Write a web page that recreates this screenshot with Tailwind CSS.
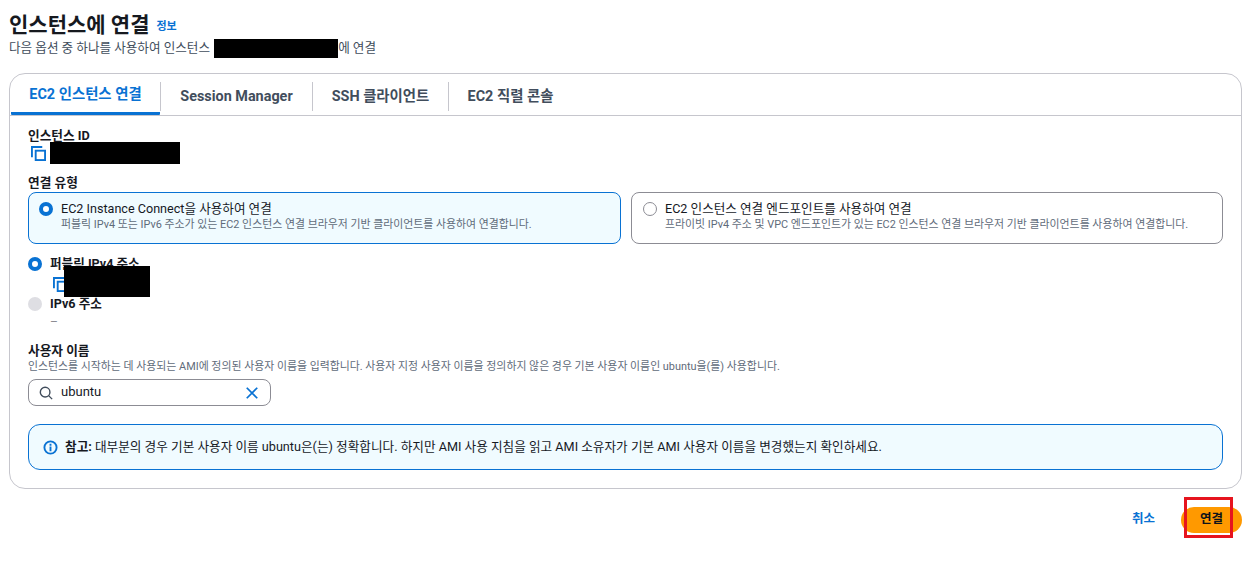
<!DOCTYPE html>
<html lang="ko">
<head>
  <meta charset="UTF-8">
  <title>인스턴스에 연결</title>
  <script src="https://cdn.jsdelivr.net/npm/@tailwindcss/browser@4"></script>
</head>
<body class="bg-white text-[#16191f] font-['Roboto','Noto_Sans_CJK_KR',sans-serif] overflow-hidden">
  <div class="relative w-[1251px] h-[564px] pl-[9px] pr-[9px] pt-[12px]">
    <!-- Header -->
    <div class="flex items-center gap-[7px] h-[26px]">
      <h1 class="text-[21px] leading-[26px] font-bold">인스턴스에 연결</h1>
      <a class="text-[11px] font-bold text-[#0972d3] mt-[5px]">정보</a>
    </div>
    <p class="relative text-[12.6px] leading-[20px] text-[#414d5c] h-[20px]">
      다음 옵션 중 하나를 사용하여 인스턴스 <span class="inline-block w-[124px] h-[19px] ml-[1px] bg-black align-middle"></span>에 연결
    </p>

    <!-- Card -->
    <div class="mt-[15px] h-[416px] border border-[#c6c6cd] rounded-[16px]">
      <!-- Tabs -->
      <div class="flex h-[42px] border-b border-[#c6c6cd] text-[14.4px] font-bold text-[#414d5c] pt-[4px]">
        <div class="w-[149px] h-[37px] flex items-center justify-center text-[#0972d3] border-b-[3px] border-[#0972d3] rounded-b-[1px] ml-[1px] -mb-px">EC2 인스턴스 연결</div>
        <div class="w-[152px] h-[29px] mt-[4px] flex items-center justify-center border-l border-[#c6c6cd]">Session Manager</div>
        <div class="w-[136px] h-[29px] mt-[4px] flex items-center justify-center border-l border-[#c6c6cd]">SSH 클라이언트</div>
        <div class="w-[124px] h-[29px] mt-[4px] flex items-center justify-center border-l border-[#c6c6cd]">EC2 직렬 콘솔</div>
      </div>

      <div class="pl-[18px] pr-[18px] pt-[12px]">
        <!-- Instance ID -->
        <div class="text-[12.7px] leading-[16px] font-bold">인스턴스 ID</div>
        <div class="flex items-center h-[22px] -mt-[2px]">
          <svg class="ml-[3px] mt-[1px]" width="15" height="15" viewBox="0 0 16 16" fill="none" stroke="#0972d3" stroke-width="2"><path d="M1 12V1h11"/><rect x="5" y="5" width="10" height="10"/></svg>
          <span class="inline-block w-[130px] h-[22px] bg-black ml-[4px]"></span>
        </div>

        <!-- Connection type -->
        <div class="text-[12.7px] leading-[16px] font-bold mt-[11px]">연결 유형</div>
        <div class="grid grid-cols-[593px_592px] gap-[10px] mt-[1px]">
          <div class="flex h-[52px] border border-[#0972d3] rounded-[8px] bg-[#f0fbff] pl-[10px] pt-[8px]">
            <span class="w-[14px] h-[14px] rounded-full border-[4px] border-[#0972d3] bg-white mt-[1px]"></span>
            <div class="ml-[8px]">
              <div class="text-[12.6px] leading-[15px]">EC2 Instance Connect을 사용하여 연결</div>
              <div class="text-[10.9px] leading-[15px] text-[#5f6b7a] mt-[1px]">퍼블릭 IPv4 또는 IPv6 주소가 있는 EC2 인스턴스 연결 브라우저 기반 클라이언트를 사용하여 연결합니다.</div>
            </div>
          </div>
          <div class="flex h-[52px] border border-[#8c8c94] rounded-[8px] pl-[11px] pt-[8px]">
            <span class="w-[14px] h-[14px] rounded-full border-[1.5px] border-[#8c8c94] bg-white mt-[1px]"></span>
            <div class="ml-[8px]">
              <div class="text-[12.6px] leading-[15px]">EC2 인스턴스 연결 엔드포인트를 사용하여 연결</div>
              <div class="text-[10.9px] leading-[15px] text-[#5f6b7a] mt-[1px]">프라이빗 IPv4 주소 및 VPC 엔드포인트가 있는 EC2 인스턴스 연결 브라우저 기반 클라이언트를 사용하여 연결합니다.</div>
            </div>
          </div>
        </div>

        <!-- Address -->
        <div class="flex items-center mt-[12px] h-[16px]">
          <span class="w-[14px] h-[14px] rounded-full border-[4px] border-[#0972d3] bg-white"></span>
          <span class="text-[12.6px] leading-[16px] font-bold ml-[8px]">퍼블릭 IPv4 주소</span>
        </div>
        <div class="relative h-[24px] pl-[25px] pt-[5px]">
          <svg width="15" height="15" viewBox="0 0 16 16" fill="none" stroke="#0972d3" stroke-width="2"><path d="M1 12V1h11"/><rect x="5" y="5" width="10" height="10"/></svg>
          <span class="absolute left-[36px] -top-[6px] w-[86px] h-[31px] bg-black"></span>
        </div>
        <div class="flex items-center h-[16px]">
          <span class="w-[14px] h-[14px] rounded-full bg-[#dedee3]"></span>
          <span class="text-[12.6px] leading-[16px] font-bold ml-[8px]">IPv6 주소</span>
        </div>
        <div class="text-[12px] leading-[16px] text-[#8c8c94] pl-[22px] mt-[2px]">–</div>

        <!-- Username -->
        <div class="text-[12.7px] leading-[16px] font-bold mt-[13px]">사용자 이름</div>
        <div class="text-[10.9px] leading-[16px] text-[#5f6b7a]">인스턴스를 시작하는 데 사용되는 AMI에 정의된 사용자 이름을 입력합니다. 사용자 지정 사용자 이름을 정의하지 않은 경우 기본 사용자 이름인 ubuntu을(를) 사용합니다.</div>
        <div class="flex items-center w-[243px] h-[27px] mt-[4px] border border-[#8c8c94] rounded-[8px] pl-[10px] pr-[11px]">
          <svg width="14" height="14" viewBox="0 0 16 16" fill="none" stroke="#414d5c" stroke-width="1.6"><circle cx="7" cy="7" r="5.5"/><path d="M11 11l4 4"/></svg>
          <span class="text-[13px] ml-[8px] -mt-[1px]">ubuntu</span>
          <svg class="ml-auto" width="14" height="14" viewBox="0 0 16 16" fill="none" stroke="#0972d3" stroke-width="2"><path d="M2 2l12 12M14 2L2 14"/></svg>
        </div>

        <!-- Note -->
        <div class="flex items-center h-[46px] mt-[18px] border border-[#0972d3] rounded-[12px] bg-[#f0fbff] pl-[14px]">
          <svg width="15" height="15" viewBox="0 0 16 16" fill="none" stroke="#0972d3" stroke-width="2"><circle cx="8" cy="8" r="6.5"/><path d="M8 7v5M8 4v2"/></svg>
          <p class="text-[12.65px] ml-[7px]"><b>참고:</b> 대부분의 경우 기본 사용자 이름 ubuntu은(는) 정확합니다. 하지만 AMI 사용 지침을 읽고 AMI 소유자가 기본 AMI 사용자 이름을 변경했는지 확인하세요.</p>
        </div>
      </div>
    </div>

    <!-- Actions -->
    <div class="flex justify-end items-center mt-[17px] h-[27px]">
      <a class="text-[12.5px] font-bold text-[#0972d3] mr-[26px]">취소</a>
      <button class="w-[61px] h-[26px] rounded-full bg-[#ff9900] text-[12.5px] font-bold text-[#0f141a]">연결</button>
    </div>
    <!-- Highlight box -->
    <div class="absolute left-[1184px] top-[497px] w-[49px] h-[41px] border-[3px] border-[#e6141e]"></div>
  </div>
</body>
</html>
